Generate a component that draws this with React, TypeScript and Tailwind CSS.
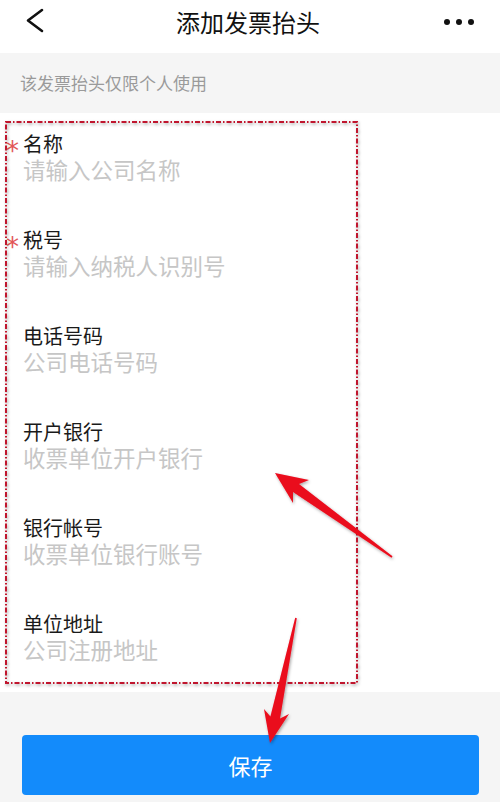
import React from "react";

const fields = [
  { label: "名称", placeholder: "请输入公司名称", required: true },
  { label: "税号", placeholder: "请输入纳税人识别号", required: true },
  { label: "电话号码", placeholder: "公司电话号码" },
  { label: "开户银行", placeholder: "收票单位开户银行" },
  { label: "银行帐号", placeholder: "收票单位银行账号" },
  { label: "单位地址", placeholder: "公司注册地址" },
];

const font = { fontFamily: '"Noto Sans CJK SC", "Noto Sans", sans-serif' };

function Annotations() {
  return (
    <svg className="pointer-events-none absolute inset-0" width="500" height="802" viewBox="0 0 500 802">
      <defs>
        <filter id="sh" x="-20%" y="-20%" width="140%" height="140%">
          <feDropShadow dx="1" dy="1.5" stdDeviation="1.5" floodColor="#000" floodOpacity="0.35" />
        </filter>
      </defs>
      {/* 虚线框 */}
      <rect
        x="6"
        y="122"
        width="351"
        height="561"
        fill="none"
        stroke="#c0152e"
        strokeWidth="2"
        strokeDasharray="5 2 1.5 2"
        filter="url(#sh)"
      />
      {/* 箭头 */}
      <polygon
        points="275,473 309,480 299,484 392.5,556.3 391.5,557.7 293,492 293,503"
        fill="#ea0a1c"
        filter="url(#sh)"
      />
      <polygon
        points="270,743 289,714 280,718.5 296.8,618.2 295.2,617.8 270.4,716.5 264,709"
        fill="#ea0a1c"
        filter="url(#sh)"
      />
    </svg>
  );
}

export default function App() {
  return (
    <div className="relative w-[500px] h-[802px] overflow-hidden bg-[#f5f5f5]" style={font}>
      {/* 顶部导航 */}
      <div className="flex items-center justify-between h-[53px] bg-white px-[20px]">
        <svg width="30" height="30" viewBox="0 0 30 30" className="-mt-[7px] ml-[2px]">
          <path d="M20 2 L6 12.5 L20 23" fill="none" stroke="#111" strokeWidth="2.6" strokeLinecap="round" strokeLinejoin="round" />
        </svg>
        <h1 className="-mt-[9px] text-[24px] leading-[30px] text-[#111]">添加发票抬头</h1>
        <div className="-mt-[10px] mr-[6px] flex items-center gap-[6px]">
          <span className="w-[6px] h-[6px] rounded-full bg-[#111]" />
          <span className="w-[6px] h-[6px] rounded-full bg-[#111]" />
          <span className="w-[6px] h-[6px] rounded-full bg-[#111]" />
        </div>
      </div>

      {/* 提示 */}
      <div className="flex items-center h-[60px] px-[20px] text-[17px] text-[#9a9a9a]">该发票抬头仅限个人使用</div>

      {/* 表单 */}
      <div className="bg-white pb-[3px]">
        {fields.map((f) => (
          <div key={f.label} className="h-[96px] px-[23px] pt-[19px]">
            <div className="relative text-[20px] leading-[24px] text-[#1a1a1a]">
              {f.required && (
                <span
                  className="absolute -left-[17px] top-[7px] text-[26px] leading-[24px] text-[#e25757]"
                  style={{ fontFamily: '"DejaVu Sans", sans-serif' }}
                >
                  *
                </span>
              )}
              {f.label}
            </div>
            <div className="text-[22.5px] leading-[26px] text-[#c6c6c6]">{f.placeholder}</div>
          </div>
        ))}
      </div>

      {/* 保存 */}
      <div className="pt-[43px] pl-[22px] pr-[21px]">
        <button className="w-full h-[60px] rounded-[4px] bg-[#138bfb] text-[22px] text-white">保存</button>
      </div>

      <Annotations />
    </div>
  );
}
